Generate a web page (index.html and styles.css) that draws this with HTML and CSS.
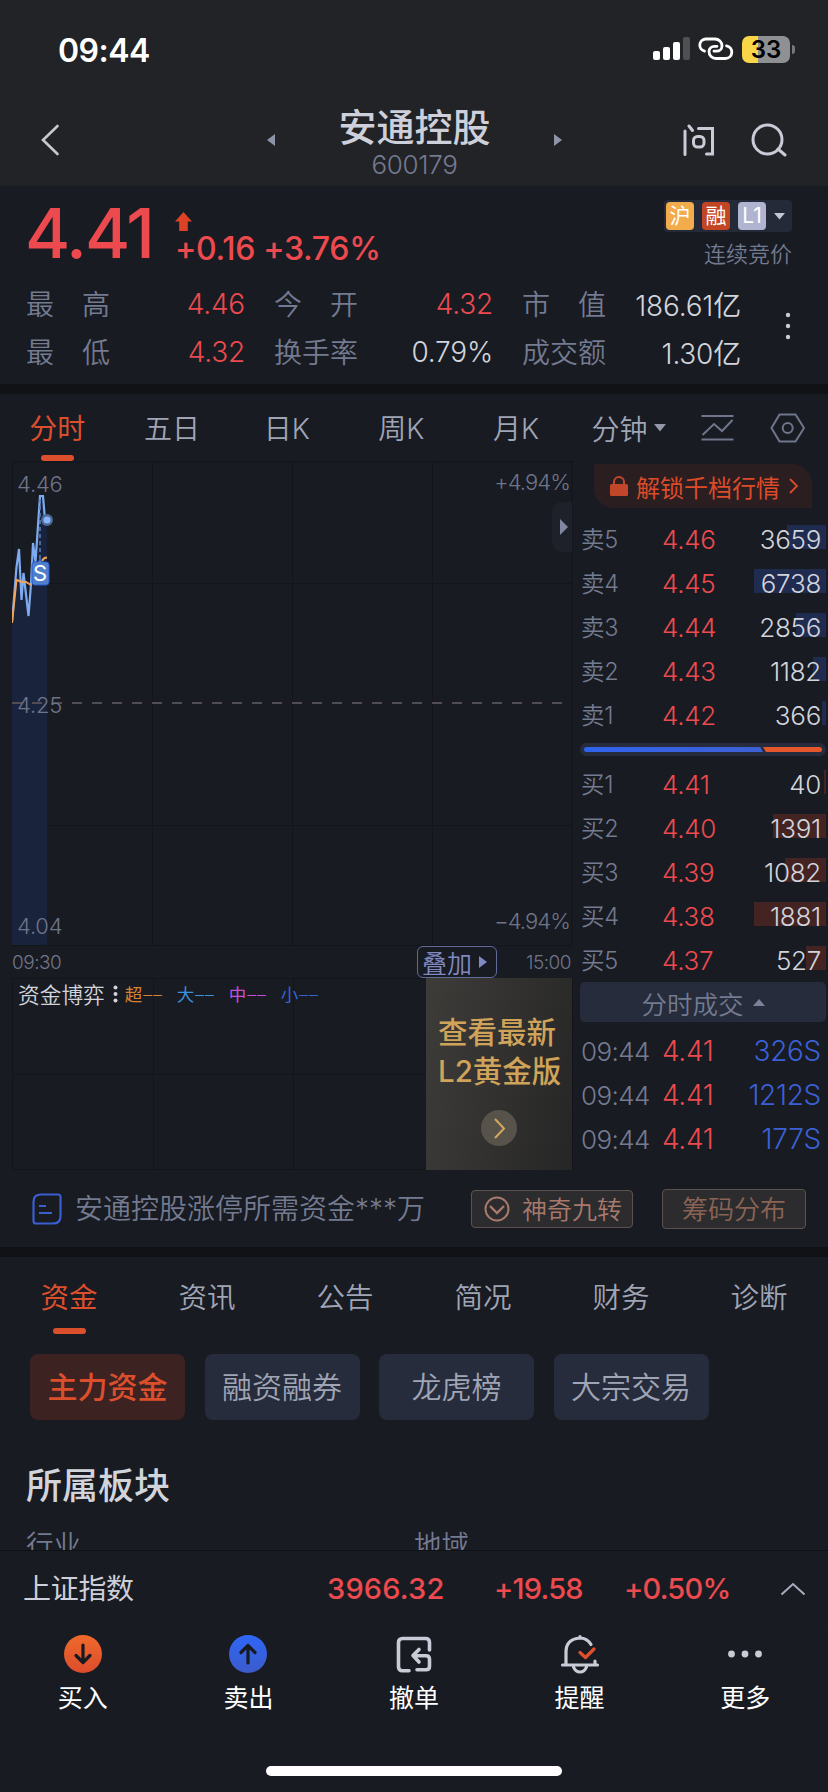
FILE: index.html
```
<!DOCTYPE html>
<html lang="zh-CN">
<head>
  <meta charset="UTF-8" />
  <title>安通控股 600179</title>
  <meta name="viewport" content="width=device-width, initial-scale=1.0" />
  <link rel="stylesheet" href="styles.css">
</head>
<body>

  <!-- Status bar + title -->
  <div class="header">
    <div class="status-bar">
      <span class="clock">09:44</span>
      <svg class="signal" width="38" height="24" viewBox="0 0 38 24">
        <rect x="0" y="14" width="7" height="9" rx="2" fill="#fff"/>
        <rect x="10" y="10" width="7" height="13" rx="2" fill="#fff"/>
        <rect x="20" y="5" width="7" height="18" rx="2" fill="#fff"/>
        <rect x="30" y="0" width="7" height="23" rx="2" fill="#4f5053"/>
      </svg>
      <svg class="hotspot" width="38" height="24" viewBox="0 0 38 24" fill="none" stroke="#fff" stroke-width="2.800" stroke-linecap="round">
        <path d="M7.500 14.200A6.200 6.200 0 0 1 8.500 2H18a7 7 0 0 1 7 7 5.400 5.400 0 0 1-5.400 5.200H17"/>
        <path d="M29.500 8.800A6.400 6.400 0 0 1 28.500 21.500H19a7 7 0 0 1-7-7 5.400 5.400 0 0 1 5.400-5.200H20"/>
      </svg>
      <div class="battery"><span>33</span></div>
      <i class="battery-tip"></i>
    </div>
    <div class="title-bar">
      <svg class="back" width="20" height="32" viewBox="0 0 20 32" fill="none" stroke="#c6cacc" stroke-width="2.600" stroke-linecap="round">
        <path d="M17.500 2L3 16l14.500 14"/>
      </svg>
      <svg class="prev" width="8" height="12" viewBox="0 0 8 12"><path d="M8 0v12L0 6z" fill="#8e94a8"/></svg>
      <div class="stock-name">
        <h1>安通控股</h1>
        <span>600179</span>
      </div>
      <svg class="next" width="8" height="12" viewBox="0 0 8 12"><path d="M0 0v12l8-6z" fill="#8e94a8"/></svg>
      <svg class="ask" width="32" height="32" viewBox="0 0 32 32" fill="none" stroke="#c9ccd6" stroke-width="3" stroke-linecap="round">
        <path d="M2 7v23.500M6 2l3.500 4.500M15.500 4.500h14v25.500h-6"/>
        <rect x="10.500" y="12.500" width="10.500" height="10.500" rx="4"/>
      </svg>
      <svg class="search" width="36" height="34" viewBox="0 0 36 34" fill="none" stroke="#c9ccd6" stroke-width="3" stroke-linecap="round">
        <circle cx="16.500" cy="16.500" r="14.500"/>
        <path d="M27 26l7 6"/>
      </svg>
    </div>
  </div>

  <!-- Quote -->
  <div class="quote">
    <div class="price-row">
      <span class="price">4.41</span>
      <div class="change">
        <svg width="17" height="20" viewBox="0 0 17 20"><path d="M8.500 0L17 9.500h-4.200V19H4.200V9.500H0z" fill="#de4226"/></svg>
        <span>+0.16 +3.76%</span>
      </div>
      <div class="market">
        <div class="tags">
          <span class="tag tag-hu">沪</span>
          <span class="tag tag-rong">融</span>
          <span class="tag tag-l1">L1</span>
          <svg width="12" height="7" viewBox="0 0 12 7"><path d="M0 0h11L5.500 6.500z" fill="#c3c7d4"/></svg>
        </div>
        <p>连续竞价</p>
      </div>
    </div>
    <div class="stats">
      <div class="stat"><label>最<i></i>高</label><span class="up">4.46</span></div>
      <div class="stat"><label>今<i></i>开</label><span class="up">4.32</span></div>
      <div class="stat"><label>市<i></i>值</label><span>186.61亿</span></div>
      <div class="stat"><label>最<i></i>低</label><span class="up">4.32</span></div>
      <div class="stat"><label>换手率</label><span>0.79%</span></div>
      <div class="stat"><label>成交额</label><span>1.30亿</span></div>
      <svg class="more-dots" width="6" height="28" viewBox="0 0 6 28" fill="#c9ccd6">
        <circle cx="3" cy="3" r="2.200"/><circle cx="3" cy="14" r="2.200"/><circle cx="3" cy="25" r="2.200"/>
      </svg>
    </div>
  </div>

  <!-- Period tabs -->
  <div class="period-tabs">
    <div class="period active">分时</div>
    <div class="period">五日</div>
    <div class="period">日K</div>
    <div class="period">周K</div>
    <div class="period">月K</div>
    <div class="minute">分钟
      <svg width="12" height="8" viewBox="0 0 12 8"><path d="M0 0h12L6 7.500z" fill="#9297aa"/></svg>
    </div>
    <svg class="trend" width="33" height="28" viewBox="0 0 33 28" fill="none" stroke="#6f758a" stroke-width="2">
      <path d="M.5 2h32M.5 25.500h32M1.500 21L13 10l8 7L31.500 6"/>
    </svg>
    <svg class="hex" width="36" height="30" viewBox="0 0 36 30" fill="none" stroke="#6f758a" stroke-width="2">
      <path d="M9.500 1.500h16L34 15l-8.500 13.500h-16L1.500 15z"/><circle cx="17.700" cy="15" r="5"/>
    </svg>
  </div>

  <div class="board">
    <!-- Charts -->
    <div class="charts">
      <div class="main-chart">
        <svg width="561" height="485" viewBox="12 461 561 485" fill="none">
          <path d="M12.500 461v485M152.500 461v485M292.500 461v485M432.500 461v485M572 461v485M12 462h561M12 583.500h561M12 825.500h561M12 945.500h561" stroke="#13151a" stroke-width="1"/>
          <path d="M12 622L16 568L19 548L22 602L26 575L28.500 616L31 585L33 543L36 556L40 496L43 496L47 520V945H12z" fill="#1a233c"/>
          <path d="M12 703h552" stroke="#524d53" stroke-width="2" stroke-dasharray="10 10"/>
          <path d="M12 622L16.500 567L19 549L21.500 600L23.500 573L28.500 616L31 584L33 543L35.500 562L40 496H43L45 520" stroke="#7eabf0" stroke-width="2.200"/>
          <path d="M12 623L16.500 580L22 582H26L31 585M42 561Q43.500 557.500 47 557.500" stroke="#f0a45a" stroke-width="2"/>
          <path d="M40 499v60" stroke="#5f83bd" stroke-width="1.500" stroke-dasharray="4 3"/>
          <circle cx="47" cy="520" r="6" fill="#4c6896"/><circle cx="47" cy="520" r="3.600" fill="#8ab4f5"/>
          <path d="M34 562h4l2-3 2 3h4q3 0 3 3v17q0 3-3 3H35q-3 0-3-3v-17q0-3 2-3z" fill="#5180cb" stroke="#2a5bd0"/>
          <text x="40" y="581" class="sell-mark">S</text>
        </svg>
        <span class="scale top-left">4.46</span>
        <span class="scale top-right">+4.94%</span>
        <span class="scale mid-left">4.25</span>
        <span class="scale bottom-left">4.04</span>
        <span class="scale bottom-right">−4.94%</span>
        <div class="fold"><svg width="8" height="16" viewBox="0 0 8 16"><path d="M0 0v16l8-8z" fill="#8187a0"/></svg></div>
      </div>
      <div class="time-axis">
        <span>09:30</span>
        <div class="overlay-btn">叠加<svg width="8" height="12" viewBox="0 0 8 12"><path d="M0 0v12l8-6z" fill="#8089c0"/></svg></div>
        <span class="close-time">15:00</span>
      </div>
      <div class="fund-chart">
        <div class="fund-legend">
          <span class="fund-title">资金博弈</span>
          <svg width="5" height="18" viewBox="0 0 5 18" fill="#d2d4dc"><circle cx="2.500" cy="2.500" r="2"/><circle cx="2.500" cy="9" r="2"/><circle cx="2.500" cy="15.500" r="2"/></svg>
          <span class="chao">超<b>––</b></span>
          <span class="da">大<b>––</b></span>
          <span class="zhong">中<b>––</b></span>
          <span class="xiao">小<b>––</b></span>
        </div>
        <div class="promo">
          <p>查看最新<br>L2黄金版</p>
          <svg width="36" height="36" viewBox="0 0 36 36" fill="none"><circle cx="18" cy="18" r="18" fill="#57534a"/><path d="M14 9l9 9.500-9 9.500" stroke="#d3a85e" stroke-width="2"/></svg>
        </div>
      </div>
    </div>

    <!-- Order book -->
    <div class="book">
      <div class="unlock">
        <svg width="18" height="22" viewBox="0 0 18 22"><path d="M4 10V7a5 5 0 0 1 10 0v3" fill="none" stroke="#c2472a" stroke-width="2"/><rect x="0" y="9" width="18" height="12" rx="1.500" fill="#c2472a"/></svg>
        <span>解锁千档行情</span>
        <svg width="10" height="16" viewBox="0 0 10 16"><path d="M1 1l7 7-7 7" fill="none" stroke="#dc4b2a" stroke-width="1.800"/></svg>
      </div>
      <div class="level sell"><label>卖5</label><span class="up">4.46</span><em>3659</em><i style="width: 39px"></i></div>
      <div class="level sell"><label>卖4</label><span class="up">4.45</span><em>6738</em><i style="width: 72px"></i></div>
      <div class="level sell"><label>卖3</label><span class="up">4.44</span><em>2856</em><i style="width: 30px"></i></div>
      <div class="level sell"><label>卖2</label><span class="up">4.43</span><em>1182</em><i style="width: 13px"></i></div>
      <div class="level sell"><label>卖1</label><span class="up">4.42</span><em>366</em><i style="width: 4px"></i></div>
      <div class="ratio"><i class="ratio-sell"></i><i class="ratio-buy"></i></div>
      <div class="level buy"><label>买1</label><span class="up">4.41</span><em>40</em><i style="width: 2px"></i></div>
      <div class="level buy"><label>买2</label><span class="up">4.40</span><em>1391</em><i style="width: 53px"></i></div>
      <div class="level buy"><label>买3</label><span class="up">4.39</span><em>1082</em><i style="width: 41px"></i></div>
      <div class="level buy"><label>买4</label><span class="up">4.38</span><em>1881</em><i style="width: 72px"></i></div>
      <div class="level buy"><label>买5</label><span class="up">4.37</span><em>527</em><i style="width: 20px"></i></div>
      <div class="trades-head">分时成交<svg width="12" height="7" viewBox="0 0 12 7"><path d="M0 7h12L6 0z" fill="#7b8196"/></svg></div>
      <div class="trade"><label>09:44</label><span class="up">4.41</span><em>326S</em></div>
      <div class="trade"><label>09:44</label><span class="up">4.41</span><em>1212S</em></div>
      <div class="trade"><label>09:44</label><span class="up">4.41</span><em>177S</em></div>
    </div>
  </div>

  <div class="notice">
    <svg width="30" height="32" viewBox="0 0 30 32" fill="none" stroke="#3a5fd0" stroke-width="2.200">
      <path d="M9 1.500h17q2.500 0 2.500 2.500v19q0 7.500-7.500 7.500H4q-2.500 0-2.500-2.500V9q0-7.500 7.500-7.500zM7 13h7M7 20h13"/>
    </svg>
    <p>安通控股涨停所需资金***万</p>
    <div class="magic">
      <svg width="26" height="26" viewBox="0 0 26 26" fill="none" stroke="#a87a6c" stroke-width="2"><circle cx="13" cy="13" r="11.500"/><path d="M6 10l7 7 7-7" stroke-width="2.400"/></svg>
      <span>神奇九转</span>
    </div>
    <div class="chips-btn">筹码分布</div>
  </div>

  <!-- Detail tabs -->
  <div class="detail">
    <div class="detail-tabs">
      <div class="active">资金</div>
      <div>资讯</div>
      <div>公告</div>
      <div>简况</div>
      <div>财务</div>
      <div>诊断</div>
    </div>
    <div class="sub-tabs">
      <div class="active">主力资金</div>
      <div>融资融券</div>
      <div>龙虎榜</div>
      <div>大宗交易</div>
    </div>
    <h2>所属板块</h2>
    <div class="sector"><span>行业</span><span>地域</span></div>
  </div>

  <!-- Bottom bar -->
  <div class="index-bar">
    <span class="index-name">上证指数</span>
    <span class="index-value">3966.32</span>
    <span class="index-diff">+19.58</span>
    <span class="index-pct">+0.50%</span>
    <svg width="26" height="14" viewBox="0 0 26 14"><path d="M1.500 12.500L13 2l11.500 10.500" fill="none" stroke="#a9adbd" stroke-width="2"/></svg>
  </div>
  <div class="nav">
    <div class="nav-item">
      <svg width="40" height="40" viewBox="0 0 40 40"><defs><linearGradient id="buyFill" x1="0" y1="0" x2="0" y2="1"><stop offset="0" stop-color="#ef6a2d"/><stop offset="1" stop-color="#dc4c2c"/></linearGradient></defs><circle cx="20" cy="20" r="19" fill="url(#buyFill)"/><path d="M20 11v17M13 21.500l7 7 7-7" fill="none" stroke="#171a21" stroke-width="3.200" stroke-linecap="round" stroke-linejoin="round"/></svg>
      <span>买入</span>
    </div>
    <div class="nav-item">
      <svg width="40" height="40" viewBox="0 0 40 40"><defs><linearGradient id="sellFill" x1="0" y1="0" x2="0" y2="1"><stop offset="0" stop-color="#2f67f6"/><stop offset="1" stop-color="#3b5bcb"/></linearGradient></defs><circle cx="20" cy="20" r="19" fill="url(#sellFill)"/><path d="M20 29V12M13 18.500l7-7 7 7" fill="none" stroke="#171a21" stroke-width="3.200" stroke-linecap="round" stroke-linejoin="round"/></svg>
      <span>卖出</span>
    </div>
    <div class="nav-item">
      <svg width="40" height="40" viewBox="0 0 40 40" fill="none" stroke="#c9ccd6" stroke-width="3.600" stroke-linecap="round" stroke-linejoin="round"><path d="M15 36.800H8.500q-4 0-4-4V8.500q0-4 4-4h23q4 0 4 4V16"/><path d="M25 15.500l-6 6 6 6.500M20 21.700h12q3.500 0 3.500 3.500v7q0 3.600-3.600 3.600H23"/></svg>
      <span>撤单</span>
    </div>
    <div class="nav-item">
      <svg width="40" height="40" viewBox="0 0 40 40" fill="none" stroke="#c9ccd6" stroke-width="3.200" stroke-linecap="round" stroke-linejoin="round"><path d="M31 10.500Q27 4 20 4 6 5 6 18v12.500M20 2.500v1.500M2.500 31h35M35 31V27M13.500 33q2 5 6.500 5t6.500-5"/><path d="M20 18.500l5.500 5 8.500-8.500" stroke="#e0502c"/></svg>
      <span>提醒</span>
    </div>
    <div class="nav-item">
      <svg width="40" height="40" viewBox="0 0 40 40" fill="#c9ccd6"><circle cx="6.500" cy="20" r="3.400"/><circle cx="20" cy="20" r="3.400"/><circle cx="33.500" cy="20" r="3.400"/></svg>
      <span>更多</span>
    </div>
  </div>
  <div class="home-bar"></div>

</body>
</html>
```
FILE: styles.css
```
* {
  box-sizing: border-box;
}
body {
  margin: 0;
  width: 828px;
  height: 1792px;
  overflow: hidden;
  background: #181b22;
  color: #d2d4dc;
  font-family: Inter, "Noto Sans CJK SC", sans-serif;
  font-size: 28px;
  font-weight: 400;
  display: flex;
  flex-direction: column;
}
h1, h2, p {
  margin: 0;
}
i, em {
  font-style: normal;
}
svg {
  display: block;
  flex: none;
}
.up {
  color: #ec4a4e;
}

/* Header */
.header {
  height: 186px;
  background: #222326;
}
.status-bar {
  height: 98px;
  padding-left: 58px;
  display: flex;
  align-items: center;
}
.clock {
  color: #fff;
  font-size: 32px;
  font-weight: 600;
  letter-spacing: -0.5px;
  width: 595px;
  padding-top: 2px;
}
.hotspot {
  margin-left: 6px;
}
.battery {
  width: 48px;
  height: 27px;
  margin-left: 7px;
  border-radius: 7px;
  background: linear-gradient(90deg, #f9d648 16px, #8f9092 16px);
  color: #000;
  font-size: 24px;
  font-weight: 600;
  line-height: 27px;
  text-align: center;
}
.battery-tip {
  width: 3px;
  height: 9px;
  margin-left: 2px;
  border-radius: 0 4px 4px 0;
  background: #77787b;
}
.title-bar {
  height: 84px;
  padding-left: 40px;
  display: flex;
  align-items: center;
}
.prev {
  margin-left: 207px;
}
.stock-name {
  width: 279px;
  height: 80px;
  text-align: center;
}
.stock-name h1 {
  font-size: 38px;
  line-height: 50px;
  font-weight: 500;
  color: #cdd0da;
  margin-top: 2px;
}
.stock-name span {
  display: block;
  font-size: 26px;
  line-height: 26px;
  letter-spacing: -0.3px;
  font-weight: 300;
  color: #747a90;
}
.ask {
  margin-left: 121px;
}
.search {
  margin-left: 36px;
}

/* Quote */
.quote {
  height: 208px;
  border-bottom: 10px solid #111216;
}
.price-row {
  height: 94px;
  padding: 0 36px 0 25px;
  display: flex;
}
.price {
  width: 150px;
  font-size: 69px;
  font-weight: 500;
  line-height: 94px;
  letter-spacing: -2px;
  color: #ec4a4e;
}
.change {
  padding-top: 26px;
  color: #ec4a4e;
  font-size: 32px;
  font-weight: 500;
  line-height: 34px;
  letter-spacing: -0.3px;
}
.change span {
  display: block;
  white-space: nowrap;
}
.market {
  margin-left: auto;
  padding-top: 14px;
}
.tags {
  width: 128px;
  height: 32px;
  padding-left: 2px;
  border-radius: 4px;
  background: #252a38;
  display: flex;
  align-items: center;
}
.tag {
  width: 28px;
  height: 28px;
  margin-right: 8px;
  border-radius: 4px;
  color: #fff;
  font-size: 21px;
  line-height: 27px;
  text-align: center;
}
.tag-hu {
  background: #f2ac4c;
}
.tag-rong {
  background: #c24624;
}
.tag-l1 {
  background: #b0b4d0;
}
.market p {
  margin-top: 7px;
  font-size: 22px;
  line-height: 30px;
  font-weight: 350;
  color: #747a90;
  text-align: right;
}
.stats {
  position: relative;
  padding-left: 26px;
  display: grid;
  grid-template-columns: 219px 219px 219px;
  column-gap: 29px;
  grid-auto-rows: 48px;
}
.stat {
  display: flex;
  justify-content: space-between;
  align-items: center;
  font-weight: 350;
  letter-spacing: -0.2px;
}
.stat label {
  width: 84px;
  padding-bottom: 2px;
  display: flex;
  justify-content: space-between;
  letter-spacing: 0;
  color: #747a90;
}
.more-dots {
  position: absolute;
  left: 785px;
  top: 32px;
}

/* Period tabs */
.period-tabs {
  height: 67px;
  display: flex;
  align-items: center;
  font-weight: 350;
  color: #a0a5b6;
}
.period {
  width: 114.700px;
  height: 67px;
  line-height: 70px;
  text-align: center;
  position: relative;
}
.period.active,
.detail-tabs .active {
  color: #dc4f2d;
  font-weight: 400;
}
.period.active::after,
.detail-tabs .active::after {
  content: "";
  position: absolute;
  left: 50%;
  bottom: 0;
  width: 33px;
  height: 6px;
  margin-left: -16.500px;
  border-radius: 3px;
  background: #dc4f2d;
}
.minute {
  margin-left: 18px;
  width: 110px;
  display: flex;
  align-items: center;
  gap: 7px;
}
.hex {
  margin-left: 36px;
}

/* Charts */
.board {
  height: 709px;
  display: flex;
}
.charts {
  width: 561px;
  margin-left: 12px;
}
.main-chart {
  height: 485px;
  position: relative;
}
.sell-mark {
  fill: #fff;
  font-size: 22px;
  font-weight: 400;
  text-anchor: middle;
}
.scale {
  position: absolute;
  font-size: 22px;
  line-height: 26px;
  font-weight: 300;
  letter-spacing: -0.2px;
  color: #6f7589;
}
.top-left {
  left: 5px;
  top: 10px;
}
.top-right {
  right: 3px;
  top: 8px;
  letter-spacing: -0.9px;
}
.mid-left {
  left: 5px;
  top: 231px;
}
.bottom-left {
  left: 5px;
  top: 452px;
}
.bottom-right {
  right: 3px;
  top: 447px;
  letter-spacing: -0.9px;
}
.fold {
  position: absolute;
  right: 1px;
  top: 41px;
  width: 20px;
  height: 50px;
  padding-left: 4px;
  border-radius: 10px 0 0 10px;
  background: #1e2129;
  display: flex;
  align-items: center;
  justify-content: center;
}
.time-axis {
  height: 32px;
  display: flex;
  align-items: center;
  font-size: 19px;
  font-weight: 300;
  letter-spacing: -0.5px;
  color: #6f7589;
}
.time-axis span {
  width: 405px;
}
.time-axis .close-time {
  width: auto;
  margin-left: 29px;
}
.overlay-btn {
  width: 80px;
  height: 32px;
  padding-left: 4px;
  border: 1.500px solid #626a9c;
  border-radius: 6px;
  display: flex;
  align-items: center;
  gap: 7px;
  font-size: 25px;
  font-weight: 350;
  letter-spacing: 0;
  color: #8089c0;
}
.fund-chart {
  height: 192px;
  display: flex;
  justify-content: space-between;
  background:
    linear-gradient(#13151a, #13151a) 0 95px / 100% 1px no-repeat,
    linear-gradient(#13151a, #13151a) 140px 0 / 1px 100% no-repeat,
    linear-gradient(#13151a, #13151a) 280px 0 / 1px 100% no-repeat;
  border: 1px solid #13151a;
}
.fund-legend {
  height: 29px;
  padding-left: 5px;
  display: flex;
  align-items: center;
  font-size: 17.500px;
}
.fund-title {
  font-size: 21.700px;
  font-weight: 350;
  margin-right: 8px;
}
.fund-legend span:nth-of-type(n + 2) {
  width: 52px;
}
.fund-legend b {
  font-weight: 300;
  letter-spacing: 1px;
  margin-left: 1px;
}
.fund-legend .chao {
  margin-left: 7px;
  color: #d9822f;
}
.fund-legend .da {
  color: #3e92dd;
}
.fund-legend .zhong {
  color: #c94fd6;
}
.fund-legend .xiao {
  color: #3563d6;
}
.promo {
  width: 146px;
  height: 192px;
  margin-top: -1px;
  padding: 35px 0 0 12px;
  background: linear-gradient(100deg, #3e3c39, #262626);
  color: #cfa35a;
}
.promo p {
  font-size: 29.500px;
  line-height: 39px;
  font-weight: 500;
  white-space: nowrap;
}
.promo svg {
  margin: 19px 0 0 43px;
}

/* Order book */
.book {
  width: 246px;
  margin-left: 7px;
}
.unlock {
  width: 218px;
  height: 44px;
  margin: 3px 0 9px 14px;
  padding-left: 16px;
  border-radius: 0 20px 0 20px;
  background: #2b1e20;
  color: #dc4b2a;
  font-size: 24px;
  display: flex;
  align-items: center;
}
.unlock span {
  margin: 0 9px 0 8px;
}
.level, .trade {
  height: 44px;
  padding: 0 5px 0 1px;
  display: flex;
  align-items: center;
  position: relative;
  font-size: 26px;
  font-weight: 350;
  letter-spacing: -0.3px;
}
.level label {
  width: 81px;
  padding-bottom: 2px;
  font-size: 23.500px;
  color: #747a90;
}
.level em, .trade em {
  margin-left: auto;
  z-index: 1;
}
.level i {
  position: absolute;
  right: 0;
  top: 8px;
  height: 24px;
}
.sell i {
  background: #202b50;
}
.buy i {
  background: #442423;
}
.ratio {
  height: 13px;
  margin: 6px 0;
  padding: 4px;
  border-radius: 7px;
  background: #262c3b;
  display: flex;
}
.ratio-sell {
  width: 179px;
  border-radius: 3px 0 0 3px;
  background: linear-gradient(90deg, #3063ee, #3f60d4);
  clip-path: polygon(0 0, 98.500% 0, 100% 100%, 0 100%);
}
.ratio-buy {
  flex: 1;
  border-radius: 0 3px 3px 0;
  background: #e3572b;
  clip-path: polygon(0 0, 100% 0, 100% 100%, 5% 100%);
}
.trades-head {
  height: 40px;
  margin-bottom: 7px;
  border-radius: 5px;
  background: #262c3b;
  color: #747a90;
  font-size: 25.500px;
  font-weight: 350;
  display: flex;
  align-items: center;
  justify-content: center;
  gap: 9px;
}
.trade {
  font-size: 28px;
}
.trade label {
  width: 81px;
  font-size: 26px;
  letter-spacing: -0.6px;
  color: #747a90;
}
.trade em {
  color: #3b60d6;
}

/* Notice row */
.notice {
  height: 87px;
  padding-left: 32px;
  border-bottom: 10px solid #111216;
  display: flex;
  align-items: center;
  font-weight: 350;
  color: #747a90;
}
.notice p {
  width: 396px;
  margin-left: 13px;
  padding-bottom: 3px;
  white-space: nowrap;
}
.magic, .chips-btn {
  background: #2c2c2f;
  border: 1.500px solid #5b5250;
  border-radius: 4px;
  display: flex;
  align-items: center;
  justify-content: center;
}
.magic {
  width: 162px;
  height: 38px;
  gap: 12px;
  padding-left: 2px;
  font-size: 25px;
  color: #a87a6c;
}
.magic span {
  padding-bottom: 1px;
}
.chips-btn {
  width: 144px;
  height: 40px;
  margin-left: 29px;
  font-size: 26px;
  padding-bottom: 2px;
  color: #8a6355;
}

/* Detail */
.detail {
  height: 293px;
  overflow: hidden;
}
.detail-tabs {
  height: 77px;
  display: flex;
  font-size: 28.500px;
  font-weight: 350;
  color: #a0a5b6;
}
.detail-tabs div {
  flex: 1;
  position: relative;
  line-height: 82px;
  text-align: center;
}
.sub-tabs {
  padding: 20px 0 0 30px;
  display: flex;
  gap: 19.500px;
}
.sub-tabs div {
  width: 155px;
  height: 66px;
  border-radius: 8px;
  background: #262c3b;
  color: #a0a5b6;
  font-size: 30px;
  font-weight: 350;
  line-height: 67px;
  text-align: center;
}
.sub-tabs .active {
  background: #3d2222;
  color: #dc4f2d;
  font-weight: 500;
}
.detail h2 {
  margin: 42px 0 0 26px;
  font-size: 36px;
  font-weight: 500;
  line-height: 48px;
}
.sector {
  display: flex;
  margin: 15px 0 0 26px;
  font-size: 27.500px;
  font-weight: 350;
  line-height: 40px;
  color: #747a90;
}
.sector span {
  width: 388px;
}

/* Bottom */
.index-bar {
  height: 77px;
  padding-left: 23px;
  border-top: 1px solid #101115;
  border-bottom: 1px solid #1b1d23;
  display: flex;
  align-items: center;
  font-size: 29px;
  font-weight: 500;
  letter-spacing: -0.8px;
  color: #ec4a4e;
}
.index-name {
  width: 304px;
  padding-bottom: 3px;
  font-size: 28px;
  font-weight: 400;
  letter-spacing: -0.3px;
  color: #cdd0da;
}
.index-value {
  width: 167px;
  letter-spacing: 0.2px;
}
.index-diff {
  width: 130px;
}
.index-pct {
  width: 156px;
}
.nav {
  display: flex;
  padding-top: 7px;
}
.nav-item {
  flex: 1;
  display: flex;
  flex-direction: column;
  align-items: center;
  color: #fff;
  font-size: 25px;
}
.nav-item span {
  margin-top: 6px;
  line-height: 36px;
}
.home-bar {
  width: 296px;
  height: 10px;
  margin: 50px auto 0;
  border-radius: 5px;
  background: #fff;
}
```
